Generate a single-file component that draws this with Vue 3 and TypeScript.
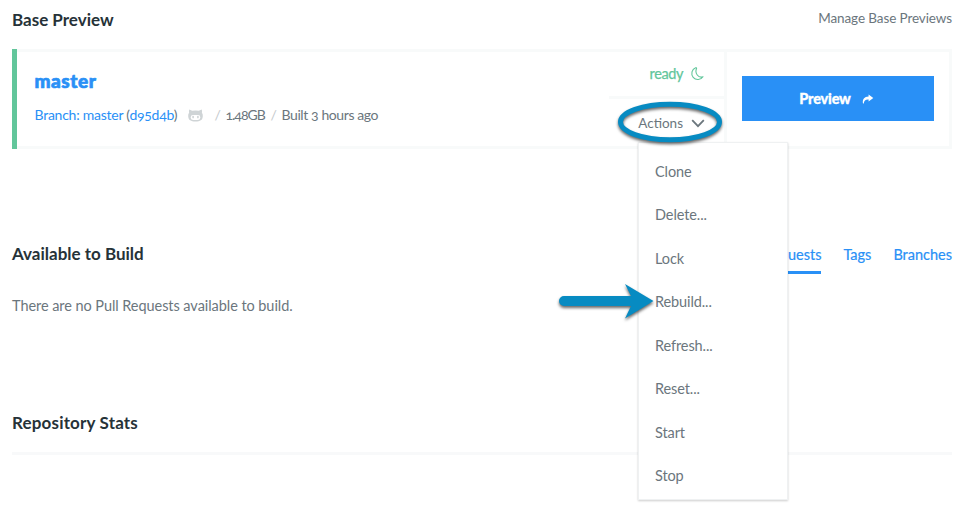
<script setup lang="ts">
import { ref } from 'vue'

const actions: string[] = ['Clone', 'Delete...', 'Lock', 'Rebuild...', 'Refresh...', 'Reset...', 'Start', 'Stop']
const tabs: string[] = ['Pull Requests', 'Tags', 'Branches']
const activeTab = ref<string>('Pull Requests')
const menuOpen = ref<boolean>(true)
</script>

<template>
  <main class="page">
    <header class="head">
      <h2>Base Preview</h2>
      <a class="manage">Manage Base Previews</a>
    </header>

    <section class="card">
      <div class="info">
        <h3>master</h3>
        <div class="meta">
          <span class="branch"><a>Branch: master</a> (<a>d95d4b</a>)</span>
          <svg class="cat" viewBox="0 0 15 13" width="15" height="13">
            <path fill="#cfd4d6" d="M1.3.5 4.2 1.7Q7.5 1.1 10.8 1.7L13.7.5Q14.3 2 13.9 3.8Q15 5 14.8 7.2C14.6 11.2 12.2 12.4 7.5 12.4S.4 11.2.2 7.2Q0 5 1.1 3.8Q.7 2 1.3.5Z" />
            <rect x="2.7" y="6" width="9.6" height="4.9" rx="2.3" fill="#fff" />
            <ellipse cx="5.1" cy="8.1" rx=".9" ry="1.4" fill="#cfd4d6" />
            <ellipse cx="9.9" cy="8.1" rx=".9" ry="1.4" fill="#cfd4d6" />
          </svg>
          <span class="slash">/</span>
          <span class="size">1.48GB</span>
          <span class="slash">/</span>
          <span class="built">Built 3 hours ago</span>
        </div>
      </div>

      <div class="status">
        <div class="ready">
          <span>ready</span>
          <svg viewBox="0 0 14 14" width="14" height="14">
            <path d="M5.6.8A6.1 6.1 0 1 0 13 9.8C8.4 11.3 4.4 6.3 6.6 1.3Q6.6.5 5.6.8Z" fill="none" stroke="#62c69b" stroke-width="1.1" stroke-linejoin="round" />
          </svg>
        </div>
        <button class="toggle" @click="menuOpen = !menuOpen">
          <span>Actions</span>
          <svg viewBox="0 0 14 9" width="14" height="9">
            <path d="M1.2 1.2 7 7.2 12.8 1.2" fill="none" stroke="#6b767d" stroke-width="1.8" />
          </svg>
          <svg class="ring" viewBox="0 0 112 50" width="112" height="50">
            <ellipse cx="56" cy="24" rx="49.5" ry="17.8" fill="none" stroke="#078bc2" stroke-width="5" />
          </svg>
        </button>
        <ul v-if="menuOpen" class="menu">
          <li v-for="action in actions" :key="action">{{ action }}</li>
        </ul>
      </div>

      <div class="launch">
        <button class="preview">
          <span>Preview</span>
          <svg viewBox="0 0 12 10" width="12" height="10">
            <path fill="#fff" d="M6.6.5 11.3 4 6.6 7.5V5.5C3.6 5.3 2 6.5 1.8 9.4H1C.1 5.4 2.4 2.4 6.6 2.4Z" />
          </svg>
        </button>
      </div>
    </section>

    <section class="available">
      <h2>Available to Build</h2>
      <nav>
        <a v-for="tab in tabs" :key="tab" :class="{ active: tab === activeTab }" @click="activeTab = tab">{{ tab }}</a>
      </nav>
    </section>
    <p class="empty">There are no Pull Requests available to build.</p>

    <section class="stats"><h2>Repository Stats</h2></section>

    <svg class="arrow" viewBox="0 0 108 46" width="108" height="46">
      <path fill="#078bc2" d="M10 16H77L71 4 99.5 21 71 38.5 77 26H10A5 5 0 0 1 10 16Z" />
    </svg>
  </main>
</template>

<style>
body { background: #fff; overflow: hidden; }
</style>

<style scoped>
* { box-sizing: border-box; }
.page {
  position: relative;
  height: 510px;
  padding: 0 12px;
  font: 14.5px/20px Lato, "Open Sans", sans-serif;
  color: #6b767d;
  overflow: hidden;
  white-space: nowrap;
}
h2, h3, p, ul { margin: 0; padding: 0; }
button { border: 0; background: none; padding: 0; font: inherit; color: inherit; }
svg { flex: none; display: block; }
h2 { font-size: 17px; line-height: 24px; font-weight: 700; color: #263238; }
.head { height: 49px; padding-top: 8px; display: flex; justify-content: space-between; }
.manage { font-size: 13.5px; line-height: 21px; letter-spacing: -.1px; }
.card {
  height: 100px;
  display: flex;
  border: 3px solid #f8fafa;
  border-left: 0;
}
.card::before { content: ""; width: 5px; margin: -3px 0; background: #62c69b; }
.info { flex: 1; padding: 17px 0 0 17.5px; }
h3 { font-size: 19px; line-height: 24px; font-weight: 900; color: #2990f6; letter-spacing: .55px; -webkit-text-stroke: .7px #2990f6; }
.meta { display: flex; align-items: center; height: 20px; margin-top: 12px; font-size: 14px; font-variant-numeric: oldstyle-nums; }
.branch { width: 142px; letter-spacing: -.25px; }
.branch a { color: #2990f6; }
.cat { margin: 1px 12px 0 11px; }
.slash { width: 11px; color: #c5cacd; }
.size { width: 45px; letter-spacing: -1px; }
.built { letter-spacing: -.4px; }
.status { position: relative; width: 115px; }
.ready { height: 47px; padding: 0 20px 0 0; display: flex; justify-content: flex-end; align-items: center; gap: 7px; color: #62c69b; border-bottom: 3px solid #f8fafa; letter-spacing: -.4px; -webkit-text-stroke: .25px #62c69b; }
.toggle { position: relative; width: 115px; height: 47px; padding: 1px 19px 0 0; display: flex; justify-content: flex-end; align-items: center; gap: 8px; font-size: 13.5px; }
.ring { position: absolute; left: 5px; top: -1px; z-index: 3; filter: drop-shadow(0 2px 1.5px #0009); }
.menu {
  position: absolute; z-index: 2; left: 29px; top: 90px; width: 150px; height: 358px; padding: 7px 0 0 16px;
  list-style: none; background: #fff; border: 1px solid #eff1f2; box-shadow: 0 1px 2px #0003;
}
.menu li { height: 43.43px; line-height: 43.43px; letter-spacing: -.1px; }
.launch { width: 227px; padding: 24px 15px 0 17px; margin-right: -2px; border-left: 3px solid #f8fafa; }
.preview { width: 192px; height: 45px; margin-left: -2px; display: flex; align-items: center; justify-content: center; gap: 11px; background: #2990f6; color: #fff; font-weight: 900; letter-spacing: -.2px; -webkit-text-stroke: .3px #fff; }
.preview svg { margin: 1px 3px 0 0; }
.available { display: flex; justify-content: space-between; margin-top: 93px; height: 46px; }
nav { display: flex; gap: 22px; padding-top: 3px; }
nav a { color: #2990f6; height: 29px; -webkit-text-stroke: .2px #2990f6; }
nav a.active { border-bottom: 3px solid #2990f6; }
.empty { margin-top: 8px; line-height: 20px; letter-spacing: -.06px; }
.stats { margin-top: 95px; height: 44px; border-bottom: 3px solid #f8f9fa; }
.stats h2 { letter-spacing: .17px; }
.arrow { position: absolute; left: 554px; top: 280px; z-index: 4; filter: drop-shadow(0 2px 1.5px #0009); }
</style>
